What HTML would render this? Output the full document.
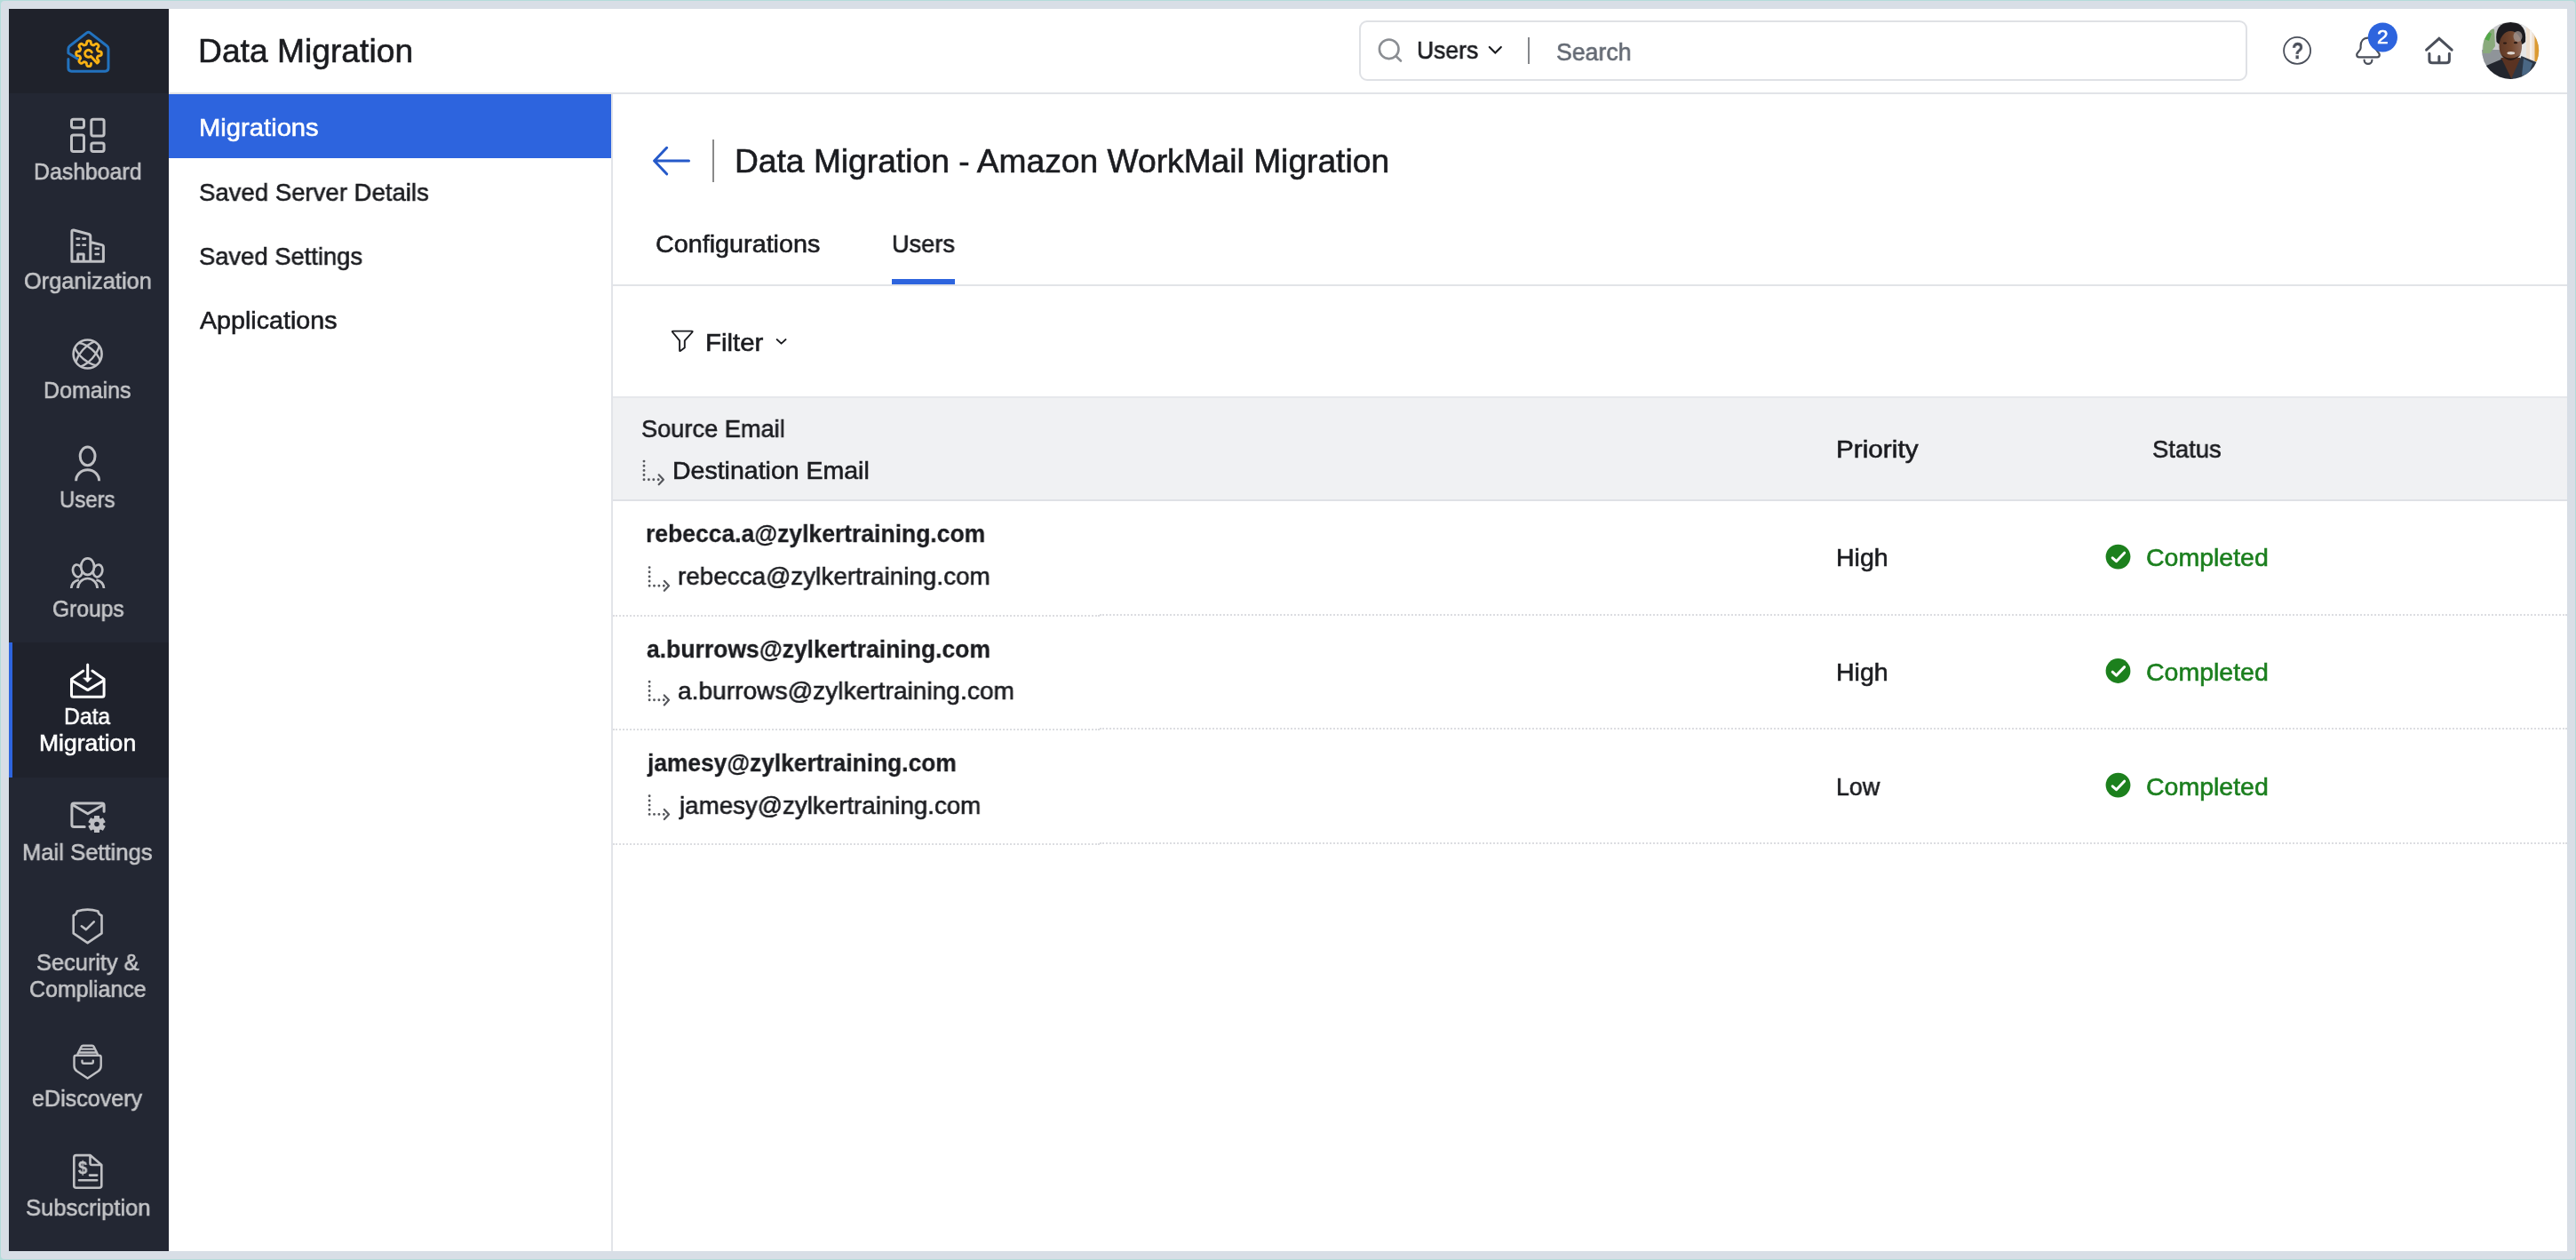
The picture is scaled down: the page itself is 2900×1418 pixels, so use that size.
<!DOCTYPE html>
<html><head><meta charset="utf-8"><title>Data Migration</title>
<style>
html,body{margin:0;padding:0}
body{width:2900px;height:1418px;position:relative;overflow:hidden;background:#b3dcda;font-family:"Liberation Sans",sans-serif}
.b{position:absolute}
.t{position:absolute;white-space:nowrap;line-height:1;transform-origin:0 0;display:block;will-change:transform;-webkit-text-stroke:0.6px}
svg{position:absolute;left:0;top:0}
</style></head><body>
<div class="b" style="left:1px;top:1px;width:2898px;height:1416px;background:#d8dee6;border-radius:4px"></div>
<!-- app surface -->
<div class="b" style="left:10px;top:10px;width:2880px;height:1398px;background:#fff"></div>
<!-- sidebar -->
<div class="b" style="left:10px;top:10px;width:180px;height:1398px;background:#232733"></div>
<div class="b" style="left:10px;top:10px;width:180px;height:95px;background:#1f222b"></div>
<div class="b" style="left:10px;top:723px;width:180px;height:152px;background:#1f222c"></div>
<div class="b" style="left:10px;top:723px;width:4px;height:152px;background:#2d64de"></div>
<!-- header -->
<div class="b" style="left:190px;top:104px;width:2700px;height:2px;background:#e2e4e8"></div>
<div class="b" style="left:1530px;top:23px;width:996px;height:64px;border:2px solid #dfe1e5;border-radius:9px;background:#fff"></div>
<div class="b" style="left:1720px;top:42px;width:2px;height:30px;background:#85878b"></div>
<!-- subnav -->
<div class="b" style="left:688px;top:106px;width:2px;height:1302px;background:#e2e4e9"></div>
<div class="b" style="left:190px;top:106px;width:498px;height:72px;background:#2d64de"></div>
<!-- content -->
<div class="b" style="left:802px;top:157px;width:2px;height:48px;background:#8a8a8a"></div>
<div class="b" style="left:690px;top:320px;width:2200px;height:2px;background:#e2e4e8"></div>
<div class="b" style="left:1004px;top:314px;width:71px;height:6px;background:#2d64de"></div>
<div class="b" style="left:690px;top:446px;width:2200px;height:118px;background:#f0f1f3;box-sizing:border-box;border-top:2px solid #e6e8ec;border-bottom:2px solid #dfe1e6"></div>
<div class="b" style="left:690px;top:692px;width:548px;height:0;border-top:2px dotted #dcdde1"></div>
<div class="b" style="left:1238px;top:691px;width:1652px;height:0;border-top:2px dotted #dcdde1"></div>
<div class="b" style="left:690px;top:820px;width:548px;height:0;border-top:2px dotted #dcdde1"></div>
<div class="b" style="left:1238px;top:819px;width:1652px;height:0;border-top:2px dotted #dcdde1"></div>
<div class="b" style="left:690px;top:949px;width:548px;height:0;border-top:2px dotted #dcdde1"></div>
<div class="b" style="left:1238px;top:948px;width:1652px;height:0;border-top:2px dotted #dcdde1"></div>
<!-- badge -->
<svg width="2900" height="1418" viewBox="0 0 2900 1418" fill="none" stroke-linecap="round" stroke-linejoin="round">
<g stroke="#2272be" stroke-width="3"><path d="M87.5,66.2 L76.9,59.8 V55 Q76.9,53 78.5,51.8 L97.7,36.9 Q99.5,35.5 101.3,36.9 L120.4,51.8 Q122,53 122,55 V76.6 Q122,80.2 118.4,80.2 H80.5 Q76.9,80.2 76.9,76.6 V66.4"/></g>
<path stroke="#fab214" stroke-width="2.9" d="M102.58,71.46 L102.44,72.31 L102.27,73.22 L102.02,73.88 L101.70,74.24 L101.35,74.43 L100.98,74.52 L100.61,74.57 L100.23,74.60 L99.85,74.60 L99.48,74.58 L99.10,74.54 L98.73,74.46 L98.38,74.30 L98.05,73.98 L97.78,73.40 L97.59,72.53 L97.46,71.63 L97.30,71.00 L97.10,70.64 L96.87,70.43 L96.62,70.28 L96.37,70.17 L96.12,70.06 L95.86,69.95 L95.60,69.85 L95.34,69.75 L95.07,69.68 L94.76,69.66 L94.37,69.76 L93.82,70.09 L93.09,70.62 L92.34,71.12 L91.73,71.35 L91.27,71.35 L90.90,71.21 L90.58,71.01 L90.28,70.78 L90.01,70.53 L89.74,70.26 L89.49,69.98 L89.26,69.68 L89.06,69.35 L88.94,68.97 L88.96,68.50 L89.24,67.86 L89.75,67.10 L90.27,66.40 L90.56,65.87 L90.64,65.50 L90.62,65.19 L90.54,64.92 L90.44,64.66 L90.34,64.41 L90.23,64.15 L90.12,63.90 L90.00,63.64 L89.85,63.40 L89.63,63.17 L89.24,62.98 L88.56,62.83 L87.65,62.69 L86.80,62.49 L86.26,62.21 L85.98,61.88 L85.83,61.52 L85.75,61.15 L85.72,60.77 L85.70,60.40 L85.71,60.02 L85.73,59.64 L85.79,59.27 L85.89,58.90 L86.09,58.55 L86.49,58.24 L87.19,58.00 L88.11,57.84 L88.93,57.70 L89.46,57.53 L89.75,57.32 L89.93,57.08 L90.06,56.83 L90.17,56.58 L90.28,56.32 L90.39,56.07 L90.49,55.81 L90.58,55.55 L90.64,55.26 L90.62,54.93 L90.45,54.49 L90.03,53.87 L89.48,53.11 L89.06,52.40 L88.93,51.85 L88.99,51.43 L89.15,51.08 L89.37,50.77 L89.61,50.48 L89.87,50.21 L90.14,49.95 L90.43,49.70 L90.73,49.48 L91.08,49.31 L91.48,49.23 L92.01,49.33 L92.70,49.70 L93.47,50.26 L94.11,50.70 L94.57,50.91 L94.92,50.94 L95.21,50.89 L95.47,50.80 L95.73,50.70 L95.99,50.60 L96.24,50.49 L96.50,50.38 L96.75,50.25 L96.99,50.08 L97.20,49.81 L97.38,49.33 L97.52,48.55 L97.67,47.62 L97.90,46.87 L98.20,46.44 L98.55,46.21 L98.92,46.10 L99.29,46.04 L99.66,46.01 L100.04,46.00 L100.42,46.01 L100.79,46.05 L101.16,46.12 L101.53,46.25 L101.87,46.51 L102.16,47.01 L102.37,47.81 L102.51,48.74 L102.65,49.46 L102.84,49.88 L103.07,50.12 L103.31,50.28 L103.56,50.40 L103.81,50.51 L104.07,50.62 L104.33,50.72 L104.58,50.82 L104.85,50.91 L105.15,50.95 L105.51,50.88 L106.01,50.63 L106.69,50.14 L107.46,49.60 L108.12,49.28 L108.61,49.23 L109.00,49.34 L109.33,49.53 L109.64,49.75 L109.92,50.00 L110.19,50.27 L110.44,50.54 L110.68,50.84 L110.89,51.15 L111.04,51.51 L111.06,51.96 L110.87,52.54 L110.40,53.28 L109.86,54.02 L109.50,54.60 L109.36,55.01 L109.37,55.33 L109.44,55.60 L109.53,55.87 L109.64,56.12 L109.74,56.38 L109.85,56.63 L109.96,56.89 L110.10,57.13 L110.30,57.37 L110.63,57.57 L111.22,57.74 L112.09,57.87 L112.99,58.04 L113.62,58.30 L113.96,58.63 L114.14,58.98 L114.23,59.35 L114.28,59.72 L114.30,60.10 L114.30,60.48 L114.28,60.85 L114.23,61.23 L114.15,61.60 L113.98,61.95 L113.65,62.28 L113.04,62.54 L112.15,62.72 L111.27,62.86 L110.66,63.02 L110.31,63.22 L110.11,63.45 L109.97,63.70 L109.86,63.95 L109.75,64.21 L109.64,64.46 L109.54,64.72 L109.44,64.98 L109.37,65.26 L109.36,65.57 L109.48,65.97 L109.83,66.54 L110.37,67.27 L110.85,68.01 L111.06,68.61 L111.04,69.06 L110.90,69.43 L110.69,69.75 L110.46,70.04 L110.20,70.32 L109.94,70.58 L109.65,70.83 L109.35,71.06 L102.22,63.32 A4,4 0 1 1 103.31,58.80"/>
<g stroke="#bfc0c4" stroke-width="3"><rect x="80.5" y="134.3" width="14" height="9.5" rx="2.2"/><rect x="102.8" y="134.3" width="14.3" height="18.6" rx="2.2"/><rect x="80.5" y="152.1" width="14" height="18.4" rx="2.2"/><rect x="102.8" y="161" width="14.3" height="9.5" rx="2.2"/></g>
<g transform="translate(0 0.8)" stroke="#bfc0c4" stroke-width="3"><path d="M80.9,293.5 V259.8 Q80.9,257.7 83,258.2 L99.8,262.7 Q101.8,263.2 101.8,265.2 V293.5 M80.9,293.5 H116.4 V277 Q116.4,275.2 114.6,274.8 L101.8,271.7 M87.7,293.5 V285.2 H94.2 V293.5"/><path stroke-width="2.6" d="M86.6,267.8 h2.6 M93.4,267.8 h2.6 M86.6,275 h2.6 M93.4,275 h2.6 M107.6,279 h3.4 M107.6,285.2 h3.4"/></g>
<clipPath id="gc"><circle cx="98.6" cy="398.5" r="16"/></clipPath><g stroke="#bfc0c4" stroke-width="2.6"><circle cx="98.6" cy="398.5" r="16"/><g clip-path="url(#gc)" stroke-width="2.4"><ellipse cx="98.6" cy="398.5" rx="17.5" ry="7.2" transform="rotate(40 98.6 398.5)"/><ellipse cx="98.6" cy="398.5" rx="17.5" ry="7.2" transform="rotate(-48 98.6 398.5)"/></g></g>
<g stroke="#bfc0c4" stroke-width="3" stroke-linecap="butt"><ellipse cx="98.6" cy="513.4" rx="8.4" ry="10.3"/><path d="M85.6,541.2 A13,12.4 0 0 1 111.6,541.2"/></g>
<g stroke="#bfc0c4" stroke-width="2.7" stroke-linecap="butt"><ellipse cx="87.2" cy="642.4" rx="5.1" ry="7" transform="rotate(-14 87.2 642.4)"/><ellipse cx="110.1" cy="642.4" rx="5.1" ry="7" transform="rotate(14 110.1 642.4)"/><ellipse cx="98.6" cy="637.6" rx="7.4" ry="9.3" fill="#232733"/><path d="M87.6,662 A11,11 0 0 1 109.6,662"/><path d="M80.2,662 Q80.8,654.3 88.8,652.6 M117,662 Q116.4,654.3 108.4,652.6"/></g>
<g stroke="#fff" stroke-width="3"><path d="M93.7,755 L80.5,764.3 V782.2 Q80.5,784.2 82.5,784.2 H115.1 Q117.1,784.2 117.1,782.2 V764.3 L103.9,755"/><path d="M81.5,766.2 L98.8,776.6 L116.1,766.2"/><path d="M98.7,748 V764"/><path d="M93.9,762.9 H103.5 L98.7,767.7 Z" fill="#fff" stroke-width="0.6"/></g>
<g stroke="#bfc0c4" stroke-width="3"><path d="M95.2,930.5 H83.2 Q80.9,930.5 80.9,928.2 V906.2 Q80.9,903.9 83.2,903.9 H114.8 Q117.1,903.9 117.1,906.2 V913.2"/><path d="M82.2,906 L98.8,915.8 L115.8,906"/></g>
<path fill="#bfc0c4" fill-rule="evenodd" stroke="#bfc0c4" stroke-width="1.2" d="M106.59,918.52 L111.41,918.52 L111.49,921.39 L113.05,922.28 L115.58,920.92 L117.98,925.09 L115.54,926.60 L115.54,928.40 L117.98,929.91 L115.58,934.08 L113.05,932.72 L111.49,933.61 L111.41,936.48 L106.59,936.48 L106.51,933.61 L104.95,932.72 L102.42,934.08 L100.02,929.91 L102.46,928.40 L102.46,926.60 L100.02,925.09 L102.42,920.92 L104.95,922.28 L106.51,921.39Z M112.4,927.5 a3.4,3.4 0 1 0 -6.8,0 a3.4,3.4 0 1 0 6.8,0Z"/>
<g stroke="#bfc0c4" stroke-width="2.6"><path d="M82.7,1030.3 Q86.2,1029.3 86.9,1025.6 Q98.6,1021.6 110.3,1025.6 Q111,1029.3 114.5,1030.3 V1050.4 L98.6,1061.2 L82.7,1050.4 Z"/><path d="M91.8,1042.3 L96.9,1046.1 L105.8,1037.3"/></g>
<g stroke="#bfc0c4" stroke-width="2.4"><path d="M87.4,1186.4 L91.5,1178 Q92.1,1176.7 93.5,1176.7 H103.7 Q105.1,1176.7 105.7,1178 L109.8,1186.4 M90.3,1180.6 H106.9 M88.4,1184.5 H108.8"/><path d="M85.7,1187.8 H111.5 Q113.7,1187.8 113.7,1190 V1199.5 Q113.7,1203.4 110.6,1205.5 L98.6,1213.6 L86.6,1205.5 Q83.5,1203.4 83.5,1199.5 V1190 Q83.5,1187.8 85.7,1187.8 Z"/><path d="M92.5,1193.6 V1195 Q92.5,1196.8 94.3,1196.8 H103 Q104.8,1196.8 104.8,1195 V1193.6"/></g>
<g stroke="#bfc0c4" stroke-width="2.6"><path d="M101.5,1300.1 H85.8 Q83.3,1300.1 83.3,1302.6 V1334.2 Q83.3,1336.7 85.8,1336.7 H111.8 Q114.3,1336.7 114.3,1334.2 V1311 L101.5,1300.1 V1309 Q101.5,1311 103.5,1311 H114.3"/><path d="M101,1322.6 H109.2 M89,1328.2 H109.2"/></g>
<g stroke="#8b8e93" stroke-width="2.6"><circle cx="1563.7" cy="55.3" r="10.8"/><path d="M1571.6,63.2 L1577,68.5"/></g>
<path stroke="#1b1c20" stroke-width="2.2" d="M1676.8,53 L1683.3,59.6 L1689.8,53"/>
<circle cx="2586.1" cy="56.9" r="15" stroke="#4a4f5a" stroke-width="1.8"/>
<g stroke="#4a4f5a" stroke-width="2.2"><path d="M2666,42.7 C2660.5,42.7 2657.6,46.6 2657.6,51.6 V54 C2657.6,57.2 2653.2,58.8 2653.2,61.8 C2653.2,63.4 2654.2,64.3 2655.8,64.3 H2676.2 C2677.8,64.3 2678.8,63.4 2678.8,61.8 C2678.8,58.8 2674.4,57.2 2674.4,54 V51.6 C2674.4,46.6 2671.5,42.7 2666,42.7 Z"/><path d="M2661.6,67.6 A4.4,4.4 0 0 0 2670.4,67.6"/></g>
<circle cx="2682.4" cy="42" r="16.6" fill="#2d64de"/>
<g stroke="#4a4f5a" stroke-width="3"><path d="M2731.6,56.2 L2745.9,43.3 L2760.2,56.2" stroke-linejoin="miter"/><path d="M2734.9,60.2 V67.4 Q2734.9,70.8 2738.3,70.8 H2754 Q2757.4,70.8 2757.4,67.4 V60.2 M2745.9,63.6 V70.6"/></g>
<clipPath id="av"><circle cx="2826.2" cy="56.9" r="32"/></clipPath>
<linearGradient id="fg" x1="0" y1="0" x2="1" y2="0"><stop offset="0" stop-color="#5d3826"/><stop offset="0.55" stop-color="#74482f"/><stop offset="1" stop-color="#8d6a5a"/></linearGradient>
<g clip-path="url(#av)" stroke="none">
<rect x="2794" y="24" width="65" height="66" fill="#c9cacc"/>
<rect x="2794" y="56" width="30" height="22" fill="#8f9499"/>
<rect x="2837" y="24" width="8" height="55" fill="#e6e6e6"/>
<rect x="2844" y="24" width="10" height="60" fill="#efdfcf"/>
<rect x="2848" y="24" width="2.5" height="60" fill="#f6f1ec"/>
<rect x="2853.5" y="40" width="6" height="29" fill="#dc9a32"/>
<path d="M2795,60 L2796,42 L2803,32 L2808,33 L2809,52 L2803,60Z" fill="#8aaa7c"/>
<path d="M2797,44 l5,-8 l3,2 l-3,8z" fill="#52a848"/>
<path d="M2810.5,47 Q2808,25.5 2826.5,25 Q2845,25.5 2843,47 Q2840,52 2826.5,52 Q2813,52 2810.5,47Z" fill="#1c1b1f"/>
<ellipse cx="2826.3" cy="52" rx="12.8" ry="17" fill="url(#fg)"/>
<path d="M2815.5,65 L2837.5,65 L2837.5,78 L2827.5,90 L2815.5,78Z" fill="#5a3322"/>
<path d="M2794,76 L2816.5,66.5 L2828,90 L2794,90Z" fill="#22252d"/>
<path d="M2860,72 L2838.5,63 L2826.5,90 L2860,90Z" fill="#2c3644"/>
<path d="M2841,66 l10,5 l-4,12 l-8,2z" fill="#4a6784"/>
<ellipse cx="2834.5" cy="41" rx="5" ry="6" fill="#a39894" opacity="0.75"/>
<ellipse cx="2820" cy="48.6" rx="2.2" ry="1.1" fill="#2a1a14"/><ellipse cx="2832" cy="48.2" rx="2.2" ry="1.1" fill="#2a1a14"/>
<ellipse cx="2826.8" cy="59.8" rx="4.4" ry="1.7" fill="#ddd5d0"/>
<path d="M2815.5,61 Q2826,75 2838,61 Q2826,70.5 2815.5,61Z" fill="#2b1d18"/>
</g>
<path stroke="#2559c9" stroke-width="3" d="M775.5,181 H737.4 M750.6,166.3 L736.6,181 L750.6,195.8"/>
<path stroke="#1b1c20" stroke-width="1.9" d="M757.9,372.6 H778.6 Q780.4,372.6 779.2,374 L770.8,383.4 V391.2 L766.2,394.8 Q765.1,395.6 765.1,394.2 V383.4 L757.3,374 Q756.1,372.6 757.9,372.6 Z"/>
<path stroke="#1b1c20" stroke-width="1.8" d="M874.6,382 L879.6,386.7 L884.6,382"/>
<g transform="translate(725.0 519.1)"><path d="M0,0 V20.6" stroke="#55575c" stroke-width="2.9" stroke-dasharray="0 5.15"/><path d="M0,20.6 H16.3" stroke="#55575c" stroke-width="2.9" stroke-dasharray="0 5.4"/><path d="M16.7,15.2 L21.9,20.6 L16.7,26.2" stroke="#55575c" stroke-width="2.2"/></g>
<g transform="translate(731.1 638.6)"><path d="M0,0 V20.6" stroke="#55575c" stroke-width="2.9" stroke-dasharray="0 5.15"/><path d="M0,20.6 H16.3" stroke="#55575c" stroke-width="2.9" stroke-dasharray="0 5.4"/><path d="M16.7,15.2 L21.9,20.6 L16.7,26.2" stroke="#55575c" stroke-width="2.2"/></g>
<g transform="translate(731.1 767.2)"><path d="M0,0 V20.6" stroke="#55575c" stroke-width="2.9" stroke-dasharray="0 5.15"/><path d="M0,20.6 H16.3" stroke="#55575c" stroke-width="2.9" stroke-dasharray="0 5.4"/><path d="M16.7,15.2 L21.9,20.6 L16.7,26.2" stroke="#55575c" stroke-width="2.2"/></g>
<g transform="translate(731.1 895.8)"><path d="M0,0 V20.6" stroke="#55575c" stroke-width="2.9" stroke-dasharray="0 5.15"/><path d="M0,20.6 H16.3" stroke="#55575c" stroke-width="2.9" stroke-dasharray="0 5.4"/><path d="M16.7,15.2 L21.9,20.6 L16.7,26.2" stroke="#55575c" stroke-width="2.2"/></g>
<circle cx="2384.5" cy="626.6" r="13.9" fill="#1c801d"/><path stroke="#fff" stroke-width="3" d="M2378.2,627.8 L2382.5,631.7 L2391.6,622.2"/>
<circle cx="2384.5" cy="755.0" r="13.9" fill="#1c801d"/><path stroke="#fff" stroke-width="3" d="M2378.2,756.2 L2382.5,760.1 L2391.6,750.6"/>
<circle cx="2384.5" cy="883.6" r="13.9" fill="#1c801d"/><path stroke="#fff" stroke-width="3" d="M2378.2,884.8 L2382.5,888.7 L2391.6,879.2"/>
</svg>
<span class="t" style="left:222.98px;top:39.35px;font-size:37px;color:#1b1c20;transform:scaleX(1.0062)">Data Migration</span>
<span class="t" style="left:1595.04px;top:41.58px;font-size:28.5px;color:#1b1c20;transform:scaleX(0.9297)">Users</span>
<span class="t" style="left:1752.16px;top:43.58px;font-size:28.5px;color:#646a74;transform:scaleX(0.9354)">Search</span>
<span class="t" style="left:38.02px;top:179.97px;font-size:26.5px;color:#c4c5c8;transform:scaleX(0.9377)">Dashboard</span>
<span class="t" style="left:26.84px;top:302.98px;font-size:26.5px;color:#c4c5c8;transform:scaleX(0.9568)">Organization</span>
<span class="t" style="left:49.12px;top:426.08px;font-size:26.5px;color:#c4c5c8;transform:scaleX(0.9422)">Domains</span>
<span class="t" style="left:67.20px;top:549.18px;font-size:26.5px;color:#c4c5c8;transform:scaleX(0.9022)">Users</span>
<span class="t" style="left:58.57px;top:672.18px;font-size:26.5px;color:#c4c5c8;transform:scaleX(0.9270)">Groups</span>
<span class="t" style="left:72.04px;top:793.27px;font-size:26.5px;color:#ffffff;transform:scaleX(0.9311)">Data</span>
<span class="t" style="left:43.80px;top:823.27px;font-size:26.5px;color:#ffffff;transform:scaleX(1.0014)">Migration</span>
<span class="t" style="left:25.07px;top:946.27px;font-size:26.5px;color:#c4c5c8;transform:scaleX(0.9662)">Mail Settings</span>
<span class="t" style="left:40.54px;top:1069.67px;font-size:26.5px;color:#c4c5c8;transform:scaleX(0.9568)">Security &amp;</span>
<span class="t" style="left:33.06px;top:1100.07px;font-size:26.5px;color:#c4c5c8;transform:scaleX(0.9400)">Compliance</span>
<span class="t" style="left:36.05px;top:1223.17px;font-size:26.5px;color:#c4c5c8;transform:scaleX(0.9471)">eDiscovery</span>
<span class="t" style="left:28.54px;top:1345.77px;font-size:26.5px;color:#c4c5c8;transform:scaleX(0.9640)">Subscription</span>
<span class="t" style="left:223.95px;top:128.78px;font-size:28.5px;color:#ffffff;transform:scaleX(1.0247)">Migrations</span>
<span class="t" style="left:223.83px;top:201.97px;font-size:28.5px;color:#1b1c20;transform:scaleX(0.9668)">Saved Server Details</span>
<span class="t" style="left:223.84px;top:273.77px;font-size:28.5px;color:#1b1c20;transform:scaleX(0.9603)">Saved Settings</span>
<span class="t" style="left:224.80px;top:345.77px;font-size:28.5px;color:#1b1c20;transform:scaleX(1.0051)">Applications</span>
<span class="t" style="left:826.69px;top:163.45px;font-size:37px;color:#1b1c20;transform:scaleX(1.0050)">Data Migration - Amazon WorkMail Migration</span>
<span class="t" style="left:738.29px;top:259.67px;font-size:28.5px;color:#1b1c20;transform:scaleX(1.0086)">Configurations</span>
<span class="t" style="left:1003.59px;top:259.67px;font-size:28.5px;color:#1b1c20;transform:scaleX(0.9533)">Users</span>
<span class="t" style="left:793.84px;top:370.77px;font-size:28.5px;color:#1b1c20;transform:scaleX(1.0301)">Filter</span>
<span class="t" style="left:721.85px;top:467.67px;font-size:28.5px;color:#1b1c20;transform:scaleX(0.9542)">Source Email</span>
<span class="t" style="left:757.00px;top:515.48px;font-size:28.5px;color:#1b1c20;transform:scaleX(0.9998)">Destination Email</span>
<span class="t" style="left:2067.11px;top:491.07px;font-size:28.5px;color:#1b1c20;transform:scaleX(1.0432)">Priority</span>
<span class="t" style="left:2423.14px;top:491.07px;font-size:28.5px;color:#1b1c20;transform:scaleX(0.9617)">Status</span>
<span class="t" style="left:726.87px;top:586.27px;font-size:28.5px;color:#1b1c20;transform:scaleX(0.9296);font-weight:700;-webkit-text-stroke:0.3px">rebecca.a@zylkertraining.com</span>
<span class="t" style="left:762.82px;top:634.27px;font-size:28.5px;color:#1b1c20;transform:scaleX(0.9769)">rebecca@zylkertraining.com</span>
<span class="t" style="left:2067.20px;top:612.77px;font-size:28.5px;color:#1b1c20;transform:scaleX(0.9988)">High</span>
<span class="t" style="left:2416.00px;top:612.77px;font-size:28.5px;color:#1b7f1e;transform:scaleX(0.9980)">Completed</span>
<span class="t" style="left:727.80px;top:715.77px;font-size:28.5px;color:#1b1c20;transform:scaleX(0.9306);font-weight:700;-webkit-text-stroke:0.3px">a.burrows@zylkertraining.com</span>
<span class="t" style="left:762.81px;top:762.57px;font-size:28.5px;color:#1b1c20;transform:scaleX(0.9875)">a.burrows@zylkertraining.com</span>
<span class="t" style="left:2067.20px;top:741.98px;font-size:28.5px;color:#1b1c20;transform:scaleX(0.9988)">High</span>
<span class="t" style="left:2416.00px;top:741.98px;font-size:28.5px;color:#1b7f1e;transform:scaleX(0.9980)">Completed</span>
<span class="t" style="left:728.72px;top:844.17px;font-size:28.5px;color:#1b1c20;transform:scaleX(0.9241);font-weight:700;-webkit-text-stroke:0.3px">jamesy@zylkertraining.com</span>
<span class="t" style="left:764.77px;top:891.57px;font-size:28.5px;color:#1b1c20;transform:scaleX(0.9727)">jamesy@zylkertraining.com</span>
<span class="t" style="left:2067.32px;top:870.98px;font-size:28.5px;color:#1b1c20;transform:scaleX(0.9408)">Low</span>
<span class="t" style="left:2416.00px;top:870.98px;font-size:28.5px;color:#1b7f1e;transform:scaleX(0.9980)">Completed</span>
<span class="t" style="left:2675.78px;top:31.34px;font-size:22.3px;color:#ffffff;transform:scaleX(1.0182)">2</span>
<span class="t" style="left:2580.03px;top:44.55px;font-size:25px;color:#4a4f5a;transform:scaleX(0.8692);font-weight:700;-webkit-text-stroke:0.3px">?</span>
<span class="t" style="left:87.90px;top:1304.62px;font-size:19.5px;color:#c4c5c8;transform:scaleX(0.9455);font-weight:700;-webkit-text-stroke:0.3px">$</span>

</body></html>
